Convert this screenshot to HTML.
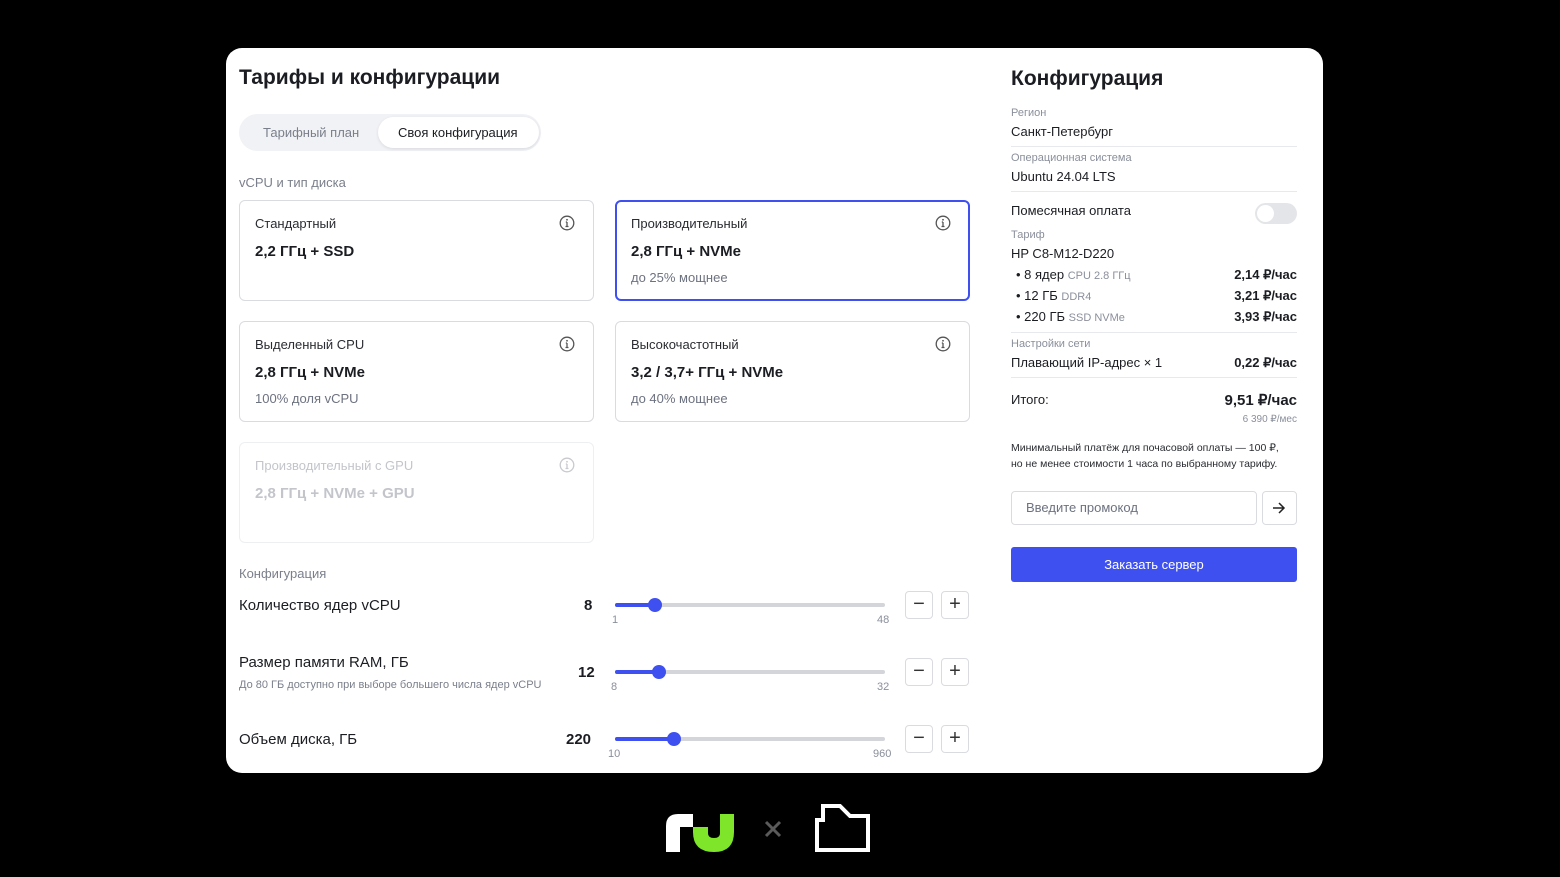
<!DOCTYPE html>
<html><head><meta charset="utf-8"><style>
*{box-sizing:border-box;margin:0;padding:0}
body{width:1560px;height:877px;background:#000;font-family:"Liberation Sans",sans-serif;position:relative;overflow:hidden;color:#1b1d22}
.a{position:absolute;white-space:nowrap}
.panel{position:absolute;left:226px;top:48px;width:1097px;height:725px;background:#fff;border-radius:16px}
.card{position:absolute;width:355px;height:101px;border:1px solid #d9dbe0;border-radius:6px;background:#fff}
.card .t{position:absolute;left:15px;top:15px;font-size:13px;color:#2a2c31}
.card .v{position:absolute;left:15px;top:42px;font-size:15px;font-weight:bold;color:#1b1d22}
.card .s{position:absolute;left:15px;top:69px;font-size:13px;color:#6d7280}
.card svg{position:absolute;right:18px;top:14px}
.lbl{font-size:11px;color:#8a8f9b}
.val{font-size:13px;color:#1b1d22}
.hr{position:absolute;left:1011px;width:286px;height:1px;background:#e8e9ec}
.track{position:absolute;height:4px;background:#d3d5da;border-radius:2px;left:615px;width:270px}
.fill{position:absolute;height:4px;background:#3e50f0;border-radius:2px;left:615px}
.knob{position:absolute;width:14px;height:14px;border-radius:50%;background:#3e50f0}
.btn{position:absolute;width:28px;height:28px;border:1px solid #d9dbe0;border-radius:4px;background:#fff;font-size:20px;text-align:center;line-height:25px;color:#333}
.num{font-size:11px;color:#8a8f9b}
</style></head><body>
<div class="panel"></div>
<div class="a" style="left:239px;top:66px;font-size:21px;font-weight:bold">Тарифы и конфигурации</div>
<div class="a" style="left:239px;top:114px;width:302px;height:37px;background:#f1f2f5;border-radius:19px"></div>
<div class="a" style="left:378px;top:117px;width:161px;height:31px;background:#fff;border-radius:16px;box-shadow:0 1px 3px rgba(0,0,0,.1)"></div>
<div class="a" style="left:263px;top:125px;font-size:13px;color:#7a7f8b">Тарифный план</div>
<div class="a" style="left:398px;top:125px;font-size:13px;color:#1b1d22">Своя конфигурация</div>
<div class="a" style="left:239px;top:175px;font-size:13px;color:#7a7f8b">vCPU и тип диска</div>

<svg width="0" height="0" style="position:absolute"><defs><g id="i"><circle cx="8" cy="8" r="6.8" fill="none" stroke="currentColor" stroke-width="1.3"/><path d="M8 7v4.5M6.5 11.5h3M6.8 7H8" stroke="currentColor" stroke-width="1.3" fill="none"/><circle cx="8" cy="4.8" r=".9" fill="currentColor"/></g></defs></svg>

<div class="card" style="left:239px;top:200px"><div class="t">Стандартный</div><div class="v">2,2 ГГц + SSD</div><svg width="16" height="16" style="color:#555"><use href="#i"/></svg></div>
<div class="card" style="left:615px;top:200px;border:2px solid #3e50f0"><div class="t" style="left:14px;top:14px">Производительный</div><div class="v" style="left:14px;top:41px">2,8 ГГц + NVMe</div><div class="s" style="left:14px;top:68px">до 25% мощнее</div><svg width="16" height="16" style="color:#555;right:17px;top:13px"><use href="#i"/></svg></div>
<div class="card" style="left:239px;top:321px"><div class="t">Выделенный CPU</div><div class="v">2,8 ГГц + NVMe</div><div class="s">100% доля vCPU</div><svg width="16" height="16" style="color:#555"><use href="#i"/></svg></div>
<div class="card" style="left:615px;top:321px"><div class="t">Высокочастотный</div><div class="v">3,2 / 3,7+ ГГц + NVMe</div><div class="s">до 40% мощнее</div><svg width="16" height="16" style="color:#555"><use href="#i"/></svg></div>
<div class="card" style="left:239px;top:442px;border-color:#eeeff1"><div class="t" style="color:#c3c5cb">Производительный с GPU</div><div class="v" style="color:#c3c5cb">2,8 ГГц + NVMe + GPU</div><svg width="16" height="16" style="color:#c8cace"><use href="#i"/></svg></div>

<div class="a" style="left:239px;top:566px;font-size:13px;color:#7a7f8b">Конфигурация</div>
<div class="a" style="left:239px;top:597px;font-size:15px">Количество ядер vCPU</div>
<div class="a" style="left:584px;top:597px;font-size:15px;font-weight:bold">8</div>
<div class="track" style="top:603px"></div><div class="fill" style="top:603px;width:40px"></div><div class="knob" style="left:648px;top:598px"></div>
<div class="a num" style="left:612px;top:614px">1</div><div class="a num" style="left:877px;top:614px">48</div>
<div class="btn" style="left:905px;top:591px">−</div><div class="btn" style="left:941px;top:591px">+</div>

<div class="a" style="left:239px;top:654px;font-size:15px">Размер памяти RAM, ГБ</div>
<div class="a" style="left:239px;top:679px;font-size:11px;color:#7a7f8b">До 80 ГБ доступно при выборе большего числа ядер vCPU</div>
<div class="a" style="left:578px;top:664px;font-size:15px;font-weight:bold">12</div>
<div class="track" style="top:670px"></div><div class="fill" style="top:670px;width:44px"></div><div class="knob" style="left:652px;top:665px"></div>
<div class="a num" style="left:611px;top:681px">8</div><div class="a num" style="left:877px;top:681px">32</div>
<div class="btn" style="left:905px;top:658px">−</div><div class="btn" style="left:941px;top:658px">+</div>

<div class="a" style="left:239px;top:731px;font-size:15px">Объем диска, ГБ</div>
<div class="a" style="left:566px;top:731px;font-size:15px;font-weight:bold">220</div>
<div class="track" style="top:737px"></div><div class="fill" style="top:737px;width:60px"></div><div class="knob" style="left:667px;top:732px"></div>
<div class="a num" style="left:608px;top:748px">10</div><div class="a num" style="left:873px;top:748px">960</div>
<div class="btn" style="left:905px;top:725px">−</div><div class="btn" style="left:941px;top:725px">+</div>

<div class="a" style="left:1011px;top:67px;font-size:21px;font-weight:bold">Конфигурация</div>
<div class="a lbl" style="left:1011px;top:107px">Регион</div>
<div class="a val" style="left:1011px;top:124px">Санкт-Петербург</div>
<div class="hr" style="top:146px"></div>
<div class="a lbl" style="left:1011px;top:152px">Операционная система</div>
<div class="a val" style="left:1011px;top:169px">Ubuntu 24.04 LTS</div>
<div class="hr" style="top:191px"></div>
<div class="a val" style="left:1011px;top:203px">Помесячная оплата</div>
<div class="a" style="left:1255px;top:203px;width:42px;height:21px;border-radius:11px;background:#e4e5e9"></div>
<div class="a" style="left:1257px;top:205px;width:17px;height:17px;border-radius:50%;background:#fff"></div>
<div class="a lbl" style="left:1011px;top:229px">Тариф</div>
<div class="a val" style="left:1011px;top:246px">HP C8-M12-D220</div>
<div class="a val" style="left:1016px;top:267px">• 8 ядер <span style="font-size:11px;color:#8a8f9b">CPU 2.8 ГГц</span></div>
<div class="a val" style="left:1016px;top:288px">• 12 ГБ <span style="font-size:11px;color:#8a8f9b">DDR4</span></div>
<div class="a val" style="left:1016px;top:309px">• 220 ГБ <span style="font-size:11px;color:#8a8f9b">SSD NVMe</span></div>
<div class="a val" style="right:263px;top:267px;font-weight:bold">2,14 ₽/час</div>
<div class="a val" style="right:263px;top:288px;font-weight:bold">3,21 ₽/час</div>
<div class="a val" style="right:263px;top:309px;font-weight:bold">3,93 ₽/час</div>
<div class="hr" style="top:332px"></div>
<div class="a lbl" style="left:1011px;top:338px">Настройки сети</div>
<div class="a val" style="left:1011px;top:355px">Плавающий IP-адрес × 1</div>
<div class="a val" style="right:263px;top:355px;font-weight:bold">0,22 ₽/час</div>
<div class="hr" style="top:377px"></div>
<div class="a val" style="left:1011px;top:392px">Итого:</div>
<div class="a" style="right:263px;top:391px;font-size:15px;font-weight:bold">9,51 ₽/час</div>
<div class="a lbl" style="right:263px;top:414px;font-size:10px">6 390 ₽/мес</div>
<div class="a" style="left:1011px;top:440px;font-size:10.5px;line-height:16px;color:#2a2c31">Минимальный платёж для почасовой оплаты — 100 ₽,<br>но не менее стоимости 1 часа по выбранному тарифу.</div>
<div class="a" style="left:1011px;top:491px;width:246px;height:34px;border:1px solid #d9dbe0;border-radius:4px"></div>
<div class="a" style="left:1026px;top:500px;font-size:13px;color:#6d7280">Введите промокод</div>
<div class="a" style="left:1262px;top:491px;width:35px;height:34px;border:1px solid #d9dbe0;border-radius:4px"></div>
<svg class="a" style="left:1272px;top:501px" width="14" height="14"><path d="M1 7h11M7 2l5 5-5 5" stroke="#222" stroke-width="1.5" fill="none"/></svg>
<div class="a" style="left:1011px;top:547px;width:286px;height:35px;background:#3e50f0;border-radius:3px;color:#fff;font-size:13px;text-align:center;line-height:35px">Заказать сервер</div>

<svg class="a" style="left:660px;top:800px" width="220" height="60">
<path d="M6 52V26Q6 14 18 14H33V27H20V52Z" fill="#fff"/>
<path d="M33 27H48V33Q48 38 54 38Q60 38 60 33V14H74V32Q74 52 54 52Q33 52 33 32Z" fill="#7ee52a"/>
<path d="M106 22l14 14M120 22l-14 14" stroke="#5a5a5a" stroke-width="3"/>
<path d="M157 50V20H163V6H180L190 16H208V50Z" fill="none" stroke="#fff" stroke-width="4"/>
</svg>
</body></html>
